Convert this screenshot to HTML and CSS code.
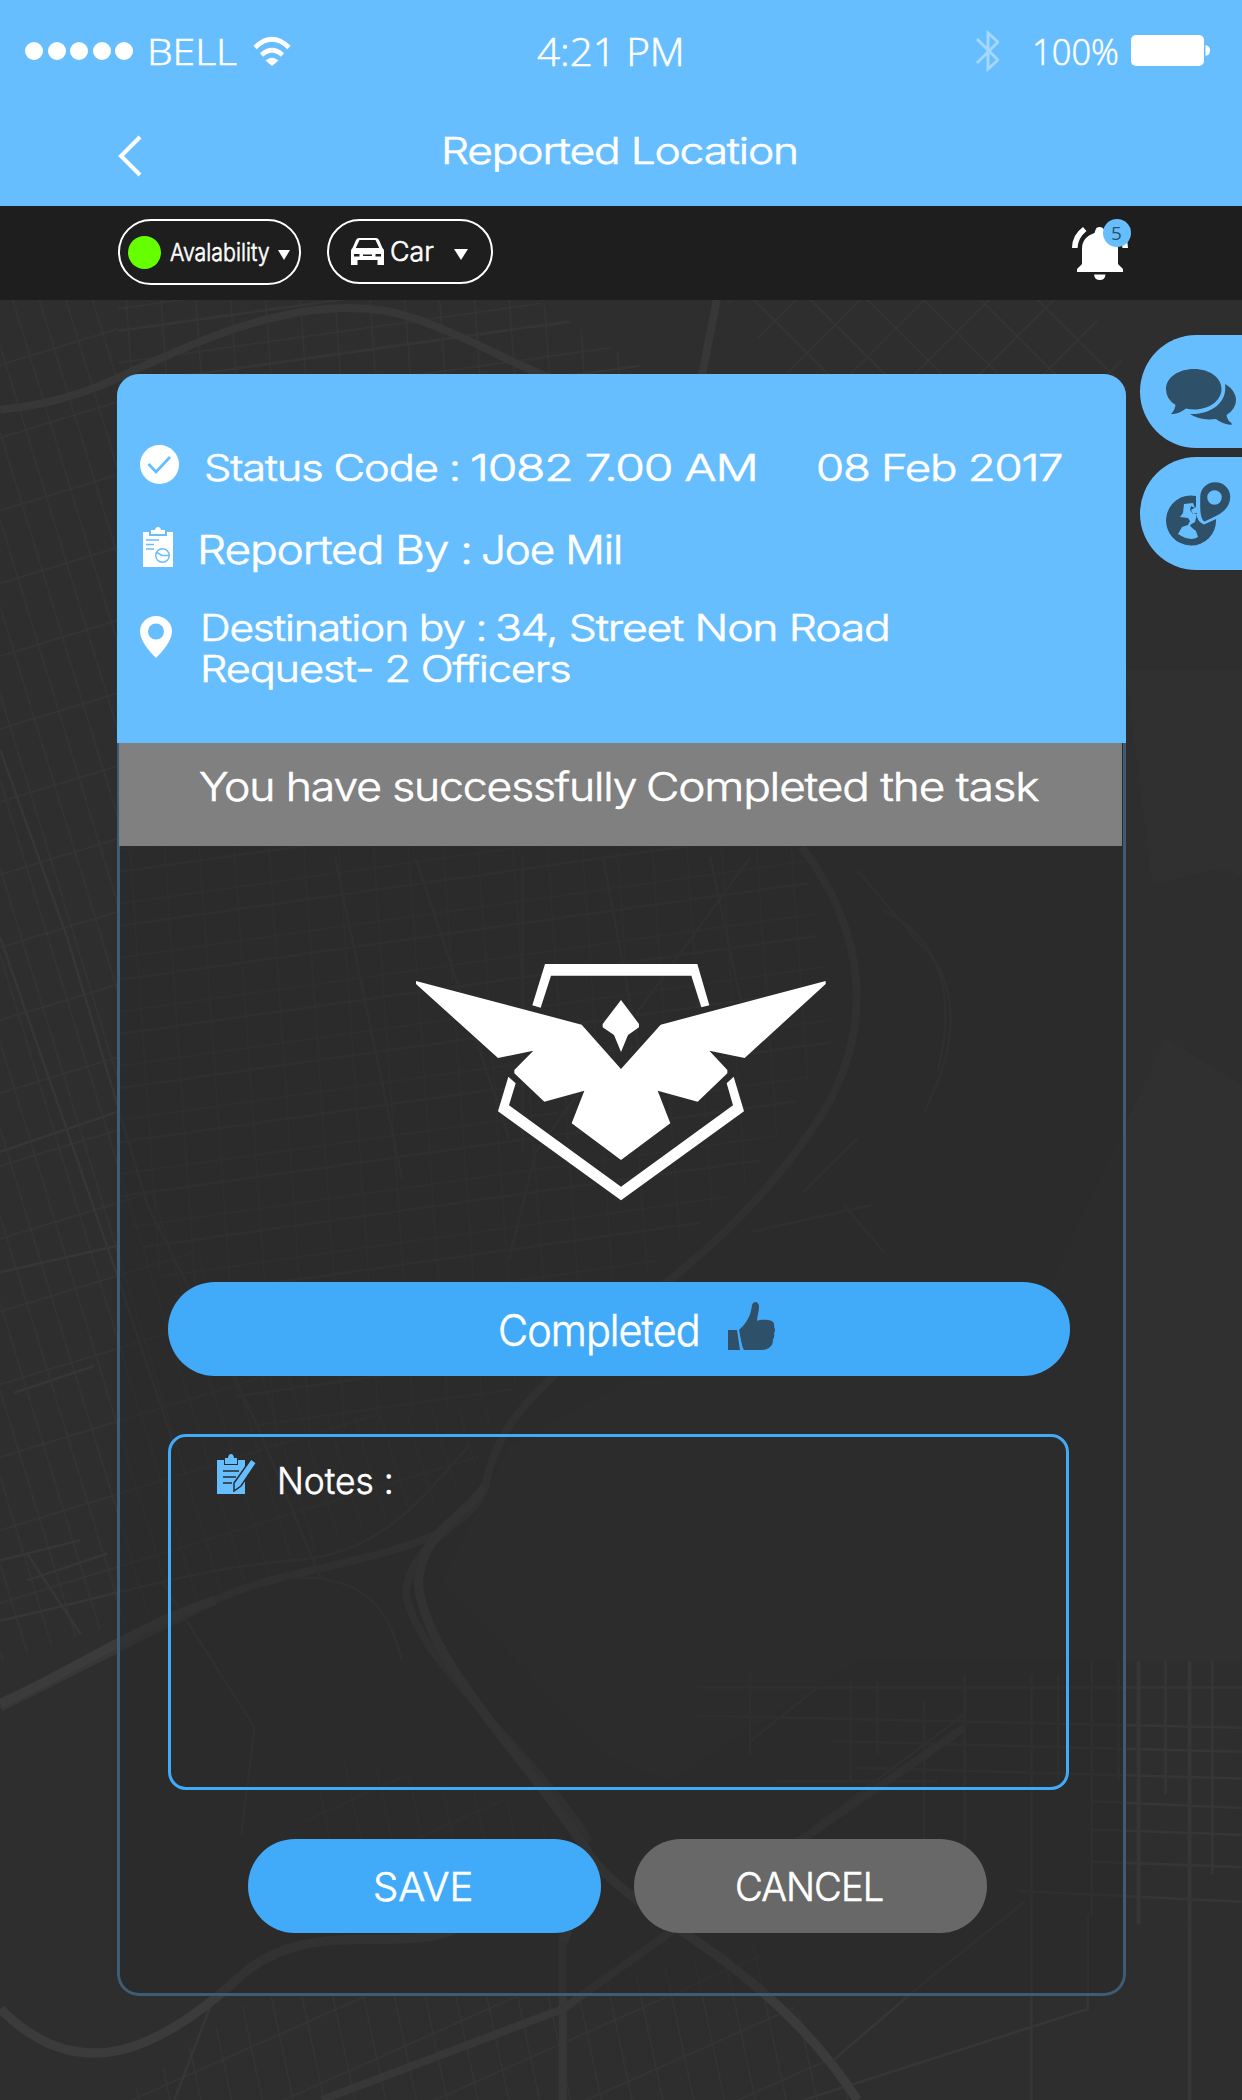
FILE: index.html
```html
<!DOCTYPE html>
<html lang="en">
<head>
<meta charset="utf-8">
<title>Reported Location</title>
<link rel="stylesheet" href="styles.css">
</head>
<body>
<div class="screen">
  <svg class="map" viewBox="0 0 927 1568" aria-hidden="true">
    <defs>
      <pattern id="blocks" width="26" height="40" patternUnits="userSpaceOnUse" patternTransform="rotate(-8) skewX(-4)">
        <path d="M0 0H26M0 17H26M0 0V40" />
      </pattern>
      <pattern id="blocks-steep" width="19" height="52" patternUnits="userSpaceOnUse" patternTransform="rotate(-17)">
        <path d="M0 0H19M0 0V52" />
      </pattern>
      <pattern id="blocks-diag" width="34" height="30" patternUnits="userSpaceOnUse" patternTransform="rotate(45)">
        <path d="M0 0H34M0 0V30" />
      </pattern>
      <pattern id="blocks-south" width="23" height="46" patternUnits="userSpaceOnUse" patternTransform="rotate(-24) skewX(-12)">
        <path d="M0 0H23M0 0V46" />
      </pattern>
    </defs>
    <path class="water" d="M870 775L927 810V1240H800L640 1240L500 1330L450 1310L330 1180L380 1080L470 1030L760 1010ZM840 500L860 660L915 648L927 655V500Z" />
    <path fill="url(#blocks)" d="M88 224H400L520 300L600 640L625 770L560 880L470 960L380 1040L200 1080L88 900Z" />
    <path fill="url(#blocks-steep)" d="M0 224H88V860L240 1060L370 1050L350 1110L160 1190L0 1240Z" />
    <path fill="url(#blocks-diag)" d="M540 224H810L850 290L600 290Z" />
    <path fill="url(#blocks-south)" d="M90 1568L190 1490L420 1490L560 1450L640 1568ZM250 1310L400 1350L420 1400L200 1420Z" />
    <g class="street">
      <path d="M520 1260H927M520 1281L927 1290M620 1300L927 1308M640 1320L927 1328M815 1345L927 1350M815 1366L927 1370M815 1390L927 1394M760 1412L927 1420M560 1300L610 1260M580 1330H700M600 1370L720 1280M560 1250V1310M635 1255V1330M655 1255V1310M690 1270V1420M720 1250V1400M770 1250V1568M790 1250V1330M815 1240V1430M835 1240V1330M870 1240V1340M905 1240V1400M765 1420L690 1480L620 1540M812 1430V1500L600 1568M640 650L700 720C720 760 705 800 690 830M600 890L640 850M630 900L660 935M560 920L650 900M660 680C700 700 715 740 700 800" />
      <path d="M0 1210C90 1190 150 1170 220 1165S320 1110 350 1080M120 1180L190 1290L180 1370M200 1180C270 1170 290 1200 300 1240M60 1220L20 1160M20 1180L80 1160M0 1165L60 1150M10 1040L70 1020M0 860L88 830M0 950L88 930M130 1568L160 1490M380 940L400 860L560 640" />
      <path d="M0 560L50 700L110 900L190 1060L240 1180M0 700L90 960L130 1080M310 640L380 850M390 640V860M450 640L480 800M530 640L560 780M250 640L300 880" />
    </g>
    <g class="avenue">
      <path d="M850 1240V1437M888 1240V1568" />
    </g>
    <g class="road">
      <path d="M0 306C60 300 90 280 110 272S230 210 310 238S410 300 520 300M535 224L523 285M420 1400V1568M240 1568L420 1500L560 1400L720 1290" />
      <path d="M598 632C650 700 650 770 615 830C570 900 520 940 480 972C400 1035 372 1060 362 1110C345 1165 220 1165 160 1195C100 1225 50 1250 0 1275M362 1110C350 1140 305 1150 303 1190C310 1240 400 1310 440 1375" />
    </g>
    <g class="highway">
      <path d="M362 1110C340 1140 318 1140 312 1180C315 1240 400 1320 440 1385C470 1430 570 1460 640 1568" />
      <path d="M0 1500C60 1560 120 1530 180 1475C230 1430 300 1460 340 1440C400 1410 440 1410 420 1450" />
      <path d="M0 1272C60 1245 100 1215 160 1195" />
    </g>
  </svg>

  <header class="header">
    <div class="status">
      <div class="dots"><i></i><i></i><i></i><i></i><i></i></div>
      <span class="t carrier">BELL</span>
      <svg class="wifi" viewBox="0 0 38 30"><path d="M2 11.500Q19 -5 36 11.500M8.500 19Q19 9.500 29.500 19" fill="none" stroke="#fff" stroke-width="4.600"/><path d="M12.500 24.500Q19 19 25.500 24.500L19 30Z" fill="#fff"/></svg>
      <span class="t clock">4:21 PM</span>
      <svg class="bluetooth" viewBox="0 0 23 42"><path d="M1 9L22 30L12 39V3L22 12L1 33" fill="none" stroke="#fff" stroke-width="3"/></svg>
      <span class="t percent">100%</span>
      <svg class="battery" viewBox="0 0 79 32"><rect width="73" height="31" rx="5" fill="#fff"/><path d="M74.500 10Q79 11 79 15.500T74.500 21Z" fill="#fff"/></svg>
    </div>
    <div class="nav">
      <svg class="back" viewBox="0 0 24 42"><path d="M22 2L3 21L22 40" fill="none" stroke="#fff" stroke-width="4"/></svg>
      <h1 class="t title">Reported Location</h1>
    </div>
  </header>

  <div class="toolbar">
    <button class="pill pill-availability"><i class="online"></i><span class="t availability">Avalability</span><i class="caret caret-small"></i></button>
    <button class="pill pill-car">
      <svg class="car-icon" viewBox="0 0 33 27"><path fill="#fff" fill-rule="evenodd" d="M8 0H25Q27 0 28 2L31.500 10Q33 11 33 13V27H26.500V22H6.500V27H0V13Q0 11 1.500 10L5 2Q6 0 8 0ZM8.500 2L4.800 10H28.200L24.500 2ZM3 16V18.500H8.500V16ZM12 16.500V18H21V16.500ZM24.500 16V18.500H30V16Z"/></svg>
      <span class="t car">Car</span><i class="caret"></i>
    </button>
    <div class="alerts">
      <svg class="bell" viewBox="0 0 56 53"><g fill="#fff"><path d="M23.500 3Q24 0 27.500 0T32 3L33 6Q46 10 46 22V37L51 42V45H5V42L10 37V22Q10 10 22.500 6ZM22 47.500H33.500Q33 53 27.800 53T22 47.500Z"/><path d="M0 21Q0 8 11 0L14.500 4Q6 11 5.500 21ZM56 21Q56 8 45 0L41.500 4Q50 11 50.500 21Z"/></g></svg>
      <span class="badge">5</span>
    </div>
  </div>

  <main class="content">
    <section class="card">
      <div class="summary">
        <div class="row row-status">
          <svg class="i-check" viewBox="0 0 39 39"><circle cx="19.500" cy="19.500" r="19.500" fill="#fff"/><path d="M8.500 19L16 27L30 12" fill="none" stroke="#67beff" stroke-width="2.800"/></svg>
          <span class="t code-label">Status Code :</span>
          <span class="t code">1082 7.00 AM</span>
          <span class="t date">08 Feb 2017</span>
        </div>
        <div class="row row-reporter">
          <svg class="i-report" viewBox="0 0 30 40"><path fill="#fff" d="M0 5H6V9H24V5H30V40H0ZM8 3H12Q12.500 0 15 0T18 3H22V7H8Z"/><g fill="none" stroke="#67beff" stroke-width="1.500"><path d="M3 13H16M3 17.500H11M3 22H11M13 25L19 28.500H26"/><circle cx="19.500" cy="28.500" r="6.800"/></g></svg>
          <span class="t reporter-label">Reported By :</span>
          <span class="t reporter">Joe Mil</span>
        </div>
        <div class="row row-destination">
          <svg class="i-pin" viewBox="0 0 32 42"><path fill="#fff" fill-rule="evenodd" d="M16 0A16 15.500 0 0 1 32 15.500C32 25 22 36 16 42C10 36 0 25 0 15.500A16 15.500 0 0 1 16 0ZM16 7.500A8 8 0 1 0 16 23.500A8 8 0 1 0 16 7.500Z"/></svg>
          <div class="lines">
            <div class="line">
              <span class="t destination-label">Destination by :</span>
              <span class="t destination">34, Street Non Road</span>
            </div>
            <span class="t request">Request- 2 Officers</span>
          </div>
        </div>
      </div>
      <div class="notice">
        <span class="t message-start">You have successfully</span>
        <span class="t message-end">Completed the task</span>
      </div>
      <div class="body">
        <svg class="emblem" viewBox="0 0 1320 840"><g fill="#fff">
          <path d="M435 72H892L928 196L904 202L874 107H453L422 203L397 196Z"/>
          <path d="M663 180L717 252V262L684 285L663 336L642 285L608 262V252Z"/>
          <path d="M48 123L545 254L663 387L782 254L1277 123V132L1034 354L928 332L982 390V400L893 485L773 452L811 550L663 660L515 550L553 452L433 485L343 400V390L400 332L294 354L48 132Z"/>
          <path d="M325 410L347 430L327 496L663 740L999 496L980 430L1001 410L1032 514L663 781L294 514Z"/>
        </g></svg>
        <button class="btn completed"><span class="t completed-text">Completed</span>
          <svg class="thumb" viewBox="0 0 47 48"><path fill="#2e5069" d="M0 28H9L12 48H0Z"/><path fill="#2e5069" d="M11 28L15 24C20 18 23 12 24 3Q25 0 28 0Q31 1 31 5C31 10 29 14 29 19C34 17 40 18 44 19Q47 21 46 25Q48 28 46 31Q47 35 45 37Q45 43 42 45Q39 48 34 48H16Q14 46 11 28Z"/><path d="M10 27L13.500 48" stroke="#42abf9" stroke-width="1.500"/></svg>
        </button>
        <div class="notes">
          <svg class="i-notes" viewBox="0 0 39 40"><path fill="#67beff" d="M0 6H7V11H21V6H28V40H0ZM8 4H11Q11.500 0 14 0T17 4H20V10H8Z"/><path d="M6 17H22M6 23H19M6 29H15" stroke="#2b2b2b" stroke-width="1.600"/><path fill="#67beff" stroke="#2b2b2b" stroke-width="1.500" d="M34 5L39.500 9L24 32L17 37L17 29Z"/></svg>
          <span class="t notes-text">Notes :</span>
        </div>
        <div class="actions">
          <button class="btn save"><span class="t save-text">SAVE</span></button>
          <button class="btn cancel"><span class="t cancel-text">CANCEL</span></button>
        </div>
      </div>
    </section>
    <aside class="tabs">
      <button class="tab"><svg class="i-chat" viewBox="0 0 70 56"><g fill="#2e5069"><path d="M28 0C44 0 55.500 9 55.500 20S44 40.500 28 40.500Q24 40.500 20 39.500Q13 45 5 45Q9 41 9.500 36Q0 30 0 20C0 9 12 0 28 0Z"/><path d="M59 15C68 20 70 27 70 31Q70 40 60.500 46Q61 51 65.500 54V56Q56 55 50 50Q34 52 24 45C44 46 62 34 59 15Z"/></g></svg></button>
      <button class="tab"><svg class="i-globe" viewBox="0 0 64 64"><path fill="#2e5069" d="M30 14V25L25 28L27 32L31 31V35Q33 41 38 42L50 37A25 25 0 1 1 30 14Z"/><path fill="#67beff" d="M18 22L27 21L29 26L25 24L24 28L27 32L31 32L29 40L24 43L25 45L30 49L32 55Q24 60 12 52L16 45L22 43L24 39L22 36L14 35L17 31Z"/><path fill="#2e5069" stroke="#67beff" stroke-width="2.500" fill-rule="evenodd" d="M49 -1A16 16 0 0 1 65.500 15C65 31 49 36 38 41C32 37 33 25 33 15A16 16 0 0 1 49 -1ZM48.500 9.500A6 6 0 1 0 48.500 21.500A6 6 0 1 0 48.500 9.500Z"/></svg></button>
    </aside>
  </main>
</div>
</body>
</html>
```
FILE: styles.css
```css
* { box-sizing: border-box; }
body { margin: 0; }
.screen {
  position: relative;
  width: 1242px;
  height: 2100px;
  overflow: hidden;
  background: #2e2e2e;
  color: #fff;
  font-family: Inter, "Liberation Sans", sans-serif;
  font-weight: 300;
}
button { padding: 0; border: 0; color: inherit; font: inherit; background: none; }
svg { display: block; flex: none; }
i { display: block; flex: none; }

/* Street map behind every layer */
.map { position: absolute; inset: 0; width: 1242px; height: 2100px; fill: none; }
.map path { stroke-linejoin: round; }
.map pattern path { stroke: #353535; stroke-width: 1.7; }
.map .water { fill: #303030; }
.map .street { stroke: #363636; stroke-width: 1.9; }
.map .avenue { stroke: #363636; stroke-width: 3; }
.map .road { stroke: #373737; stroke-width: 6; }
.map .highway { stroke: #3b3b3b; stroke-width: 7; }

/* Text set in an extended or condensed width */
.t {
  display: block;
  flex: none;
  margin: 0;
  white-space: nowrap;
  text-align: left;
  transform-origin: 0 50%;
  -webkit-text-stroke: .6px #fff;
}

.header { position: relative; height: 206px; background: #67beff; }
.status {
  display: flex;
  align-items: center;
  height: 102px;
  padding-left: 25px;
  font-family: "Open Sans", sans-serif;
  font-size: 37px;
  line-height: 50px;
}
.dots { display: flex; gap: 4.500px; width: 122px; }
.dots i { width: 18px; height: 18px; border-radius: 50%; background: #fff; }
.carrier { width: 106px; font-size: 36px; transform: scaleX(1.134) translateY(1px); }
.wifi { width: 38px; height: 30px; }
.clock { width: 439px; margin-left: 246px; font-size: 39px; transform: scaleX(1.035); }
.bluetooth { width: 23px; height: 42px; opacity: .4; }
.percent { width: 99px; margin-left: 33px; transform: scaleX(.933); }
.battery { width: 79px; height: 32px; }
.nav { display: flex; height: 104px; padding: 33px 0 0 118px; }
.back { width: 24px; height: 42px; }
.title { width: 354px; margin-left: 299px; font-size: 37px; font-weight: 300; line-height: 32px; letter-spacing: -1px; transform: scaleX(1.198); }

.toolbar {
  position: relative;
  display: flex;
  height: 94px;
  padding: 13px 0 0 118px;
  background: #1e1e1e;
}
.pill {
  display: flex;
  align-items: center;
  border: 2px solid #fff;
  border-radius: 36px;
}
.pill-availability { width: 183px; height: 66px; padding-left: 8px; }
.pill-car { width: 166px; height: 65px; margin-left: 26px; padding-left: 22px; }
.online { width: 33px; height: 33px; border-radius: 50%; background: #6f0; }
.availability { width: 98px; margin-left: 9px; font-size: 24px; transform: scaleX(.89); }
.caret { border: solid transparent; border-width: 11px 7.500px 0; border-top-color: #fff; margin: 5px 0 0 22px; }
.caret-small { border-width: 10px 6.500px 0; margin: 6px 0 0 10px; }
.car-icon { width: 33px; height: 27px; }
.car { width: 42px; margin-left: 6px; font-size: 27px; transform: scaleX(.99); }
.alerts { position: relative; width: 56px; margin: 8px 0 0 578.5px; }
.bell { width: 56px; height: 53px; }
.badge {
  position: absolute;
  left: 31px;
  top: -8px;
  width: 28px;
  height: 28px;
  border-radius: 50%;
  background: #67beff;
  color: #2e5069;
  font: 19px/28px "Open Sans", sans-serif;
  text-align: center;
}

.content { position: relative; display: flex; align-items: flex-start; padding-left: 117px; }
.card {
  width: 1009px;
  height: 1622px;
  margin-top: 74px;
  border-radius: 22px;
  background: rgba(39, 39, 39, .45);
  box-shadow: inset 0 0 0 3px #3f5c75;
}
.summary { height: 369px; padding: 71px 0 0 23px; border-radius: 22px 22px 0 0; background: #67beff; }
.row { display: flex; font-size: 37px; line-height: 46px; letter-spacing: -1px; }
.row-status { height: 80px; }
.i-check { width: 39px; height: 39px; }
.code-label { width: 266px; margin-left: 25px; transform: scaleX(1.175); }
.code { width: 346px; transform: scaleX(1.3); }
.date { width: 245px; transform: scaleX(1.231); }
.row-reporter { height: 90px; padding: 2px 0 0 4px; }
.i-report { width: 30px; height: 40px; margin-left: -1px; }
.reporter-label { width: 284px; margin-left: 24px; font-size: 39px; transform: scaleX(1.183); }
.reporter { width: 140px; font-size: 39px; transform: scaleX(1.127); }
.row-destination { padding-top: 1px; }
.i-pin { width: 32px; height: 42px; }
.lines { margin: -9px 0 0 28px; line-height: 41px; }
.line { display: flex; }
.destination-label { width: 295px; transform: scaleX(1.147); }
.destination { width: 395px; transform: scaleX(1.204); }
.request { width: 368px; transform: scaleX(1.171); }
.notice {
  display: flex;
  width: 1003px;
  height: 103px;
  margin-left: 2px;
  padding: 22px 0 0 80px;
  background: gray;
  font-size: 39px;
  line-height: 44px;
  letter-spacing: -1px;
}
.message-start { width: 447px; transform: scaleX(1.141); }
.message-end { width: 393px; transform: scaleX(1.177); }
.body { padding: 94px 0 0 51px; }
.emblem { width: 440px; height: 280px; margin-left: 232px; }
.btn { display: flex; align-items: center; height: 94px; border-radius: 47px; background: #42abf9; }
.completed { width: 902px; margin-top: 62px; padding: 2px 0 0 330px; font-size: 44px; }
.completed-text { width: 200px; letter-spacing: -1px; transform: scaleX(.94); }
.thumb { width: 47px; height: 48px; margin: -9px 0 0 30px; }
.notes {
  display: flex;
  width: 901px;
  height: 356px;
  margin-top: 58px;
  padding: 17px 0 0 46px;
  border: 3px solid #42abf9;
  border-radius: 18px;
  font-size: 37px;
  line-height: 54px;
}
.i-notes { width: 39px; height: 40px; overflow: visible; }
.notes-text { width: 114px; margin-left: 21px; transform: scaleX(.955); }
.actions { display: flex; gap: 33px; margin: 49px 0 0 80px; font-size: 40px; }
.save { width: 353px; padding-left: 125px; }
.cancel { width: 353px; padding-left: 101px; background: #686868; }
.save-text { width: 98px; transform: scaleX(1); }
.cancel-text { width: 147px; letter-spacing: -1px; transform: scaleX(.955); }

.tabs { width: 102px; margin: 35px 0 0 14px; }
.tab { display: block; width: 102px; height: 113px; margin-bottom: 9px; padding: 0 0 0 26px; border-radius: 57px 0 0 57px; background: #67beff; }
.i-chat { width: 70px; height: 56px; margin-top: 10px; }
.i-globe { width: 64px; height: 64px; margin-top: 0; overflow: visible; }
```
